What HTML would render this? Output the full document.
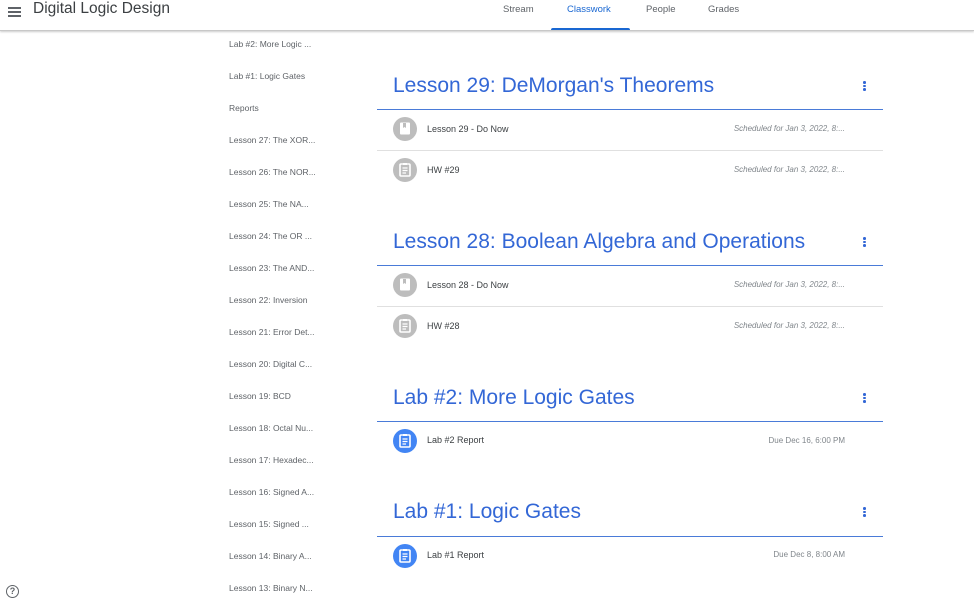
<!DOCTYPE html>
<html><head><meta charset="utf-8"><style>
*{margin:0;padding:0;box-sizing:border-box}
body{width:974px;height:598px;overflow:hidden;background:#fff;font-family:"Liberation Sans",Arial,sans-serif;position:relative}
.hdr{position:absolute;left:0;top:0;width:974px;height:31px;background:#fff;border-bottom:1px solid #c8c8c8;box-shadow:0 1px 2px rgba(0,0,0,.2);z-index:2}
.t{position:absolute;white-space:nowrap}
.side{position:absolute;left:229px;font-size:8.5px;color:#5f6368}
.title{position:absolute;left:393px;font-size:21px;color:#3367d6;line-height:24px}
.line{position:absolute;left:377px;width:506px;height:1px;background:#4a7bd8}
.div{position:absolute;left:377px;width:506px;height:1px;background:#e0e0e0}
.ic{position:absolute;left:393px;width:24px;height:24px;border-radius:50%;background:#bdbdbd}
.ic.b{background:#4285f4}
.ic svg{position:absolute;left:6px;top:5px}
.name{position:absolute;left:427px;font-size:9px;color:#3c4043}
.date{position:absolute;right:129px;font-size:8px;color:#80868b}
.it{font-style:italic}
.dots{position:absolute;left:863px;width:3px}
.dots i{display:block;width:2.5px;height:2.5px;border-radius:50%;background:#3367d6;margin-bottom:1.2px}
</style></head><body>
<div class="hdr">
 <div class="t" style="left:8px;top:5px;width:13px"><div style="height:1.5px;background:#5f6368;margin:2px 0 2.5px"></div><div style="height:1.5px;background:#5f6368;margin-bottom:2.5px"></div><div style="height:1.5px;background:#5f6368"></div></div>
 <div class="t" style="left:33px;top:0;font-size:15.5px;color:#3c4043">Digital Logic Design</div>
 <div class="t" style="left:503px;top:4px;font-size:9.5px;color:#5f6368">Stream</div>
 <div class="t" style="left:567px;top:4px;font-size:9.5px;color:#1967d2">Classwork</div>
 <div class="t" style="left:646px;top:4px;font-size:9.5px;color:#5f6368">People</div>
 <div class="t" style="left:708px;top:4px;font-size:9.5px;color:#5f6368">Grades</div>
 <div class="t" style="left:551px;top:28px;width:79px;height:2px;background:#1967d2;border-radius:2px 2px 0 0"></div>
</div>

<div class="t side" style="top:39px">Lab #2: More Logic ...</div>
<div class="t side" style="top:71px">Lab #1: Logic Gates</div>
<div class="t side" style="top:103px">Reports</div>
<div class="t side" style="top:135px">Lesson 27: The XOR...</div>
<div class="t side" style="top:167px">Lesson 26: The NOR...</div>
<div class="t side" style="top:199px">Lesson 25: The NA...</div>
<div class="t side" style="top:231px">Lesson 24: The OR ...</div>
<div class="t side" style="top:263px">Lesson 23: The AND...</div>
<div class="t side" style="top:295px">Lesson 22: Inversion</div>
<div class="t side" style="top:327px">Lesson 21: Error Det...</div>
<div class="t side" style="top:359px">Lesson 20: Digital C...</div>
<div class="t side" style="top:391px">Lesson 19: BCD</div>
<div class="t side" style="top:423px">Lesson 18: Octal Nu...</div>
<div class="t side" style="top:455px">Lesson 17: Hexadec...</div>
<div class="t side" style="top:487px">Lesson 16: Signed A...</div>
<div class="t side" style="top:519px">Lesson 15: Signed ...</div>
<div class="t side" style="top:551px">Lesson 14: Binary A...</div>
<div class="t side" style="top:583px">Lesson 13: Binary N...</div>

<div class="t" style="left:6px;top:585px;width:13px;height:13px;border:1.5px solid #5f6368;border-radius:50%;font-size:9px;color:#5f6368;text-align:center;line-height:10px;font-weight:bold">?</div>

<div class="title t" style="top:74px">Lesson 29: DeMorgan's Theorems</div>
<div class="dots" style="top:81px"><i></i><i></i><i></i></div>
<div class="line" style="top:109px"></div>
<div class="ic" style="top:117px"><svg width="12" height="14" viewBox="0 0 12 14"><rect x="1" y="0.5" width="10" height="12" rx="1" fill="#fff"/><path d="M4 1v5l1.5-1 1.5 1V1z" fill="#bdbdbd"/></svg></div>
<div class="t name" style="top:124px">Lesson 29 - Do Now</div>
<div class="t date it" style="top:124px">Scheduled for Jan 3, 2022, 8:...</div>
<div class="div" style="top:150px"></div>
<div class="ic" style="top:158px"><svg width="12" height="14" viewBox="0 0 12 14"><rect x="1" y="1" width="10" height="12" rx="1" fill="none" stroke="#fff" stroke-width="1.6"/><rect x="4" y="0" width="4" height="2" fill="#fff"/><path d="M3.5 5h5M3.5 7.5h5M3.5 10h3.5" stroke="#fff" stroke-width="1.2"/></svg></div>
<div class="t name" style="top:165px">HW #29</div>
<div class="t date it" style="top:165px">Scheduled for Jan 3, 2022, 8:...</div>

<div class="title t" style="top:230px">Lesson 28: Boolean Algebra and Operations</div>
<div class="dots" style="top:237px"><i></i><i></i><i></i></div>
<div class="line" style="top:265px"></div>
<div class="ic" style="top:273px"><svg width="12" height="14" viewBox="0 0 12 14"><rect x="1" y="0.5" width="10" height="12" rx="1" fill="#fff"/><path d="M4 1v5l1.5-1 1.5 1V1z" fill="#bdbdbd"/></svg></div>
<div class="t name" style="top:280px">Lesson 28 - Do Now</div>
<div class="t date it" style="top:280px">Scheduled for Jan 3, 2022, 8:...</div>
<div class="div" style="top:306px"></div>
<div class="ic" style="top:314px"><svg width="12" height="14" viewBox="0 0 12 14"><rect x="1" y="1" width="10" height="12" rx="1" fill="none" stroke="#fff" stroke-width="1.6"/><rect x="4" y="0" width="4" height="2" fill="#fff"/><path d="M3.5 5h5M3.5 7.5h5M3.5 10h3.5" stroke="#fff" stroke-width="1.2"/></svg></div>
<div class="t name" style="top:321px">HW #28</div>
<div class="t date it" style="top:321px">Scheduled for Jan 3, 2022, 8:...</div>

<div class="title t" style="top:386px">Lab #2: More Logic Gates</div>
<div class="dots" style="top:393px"><i></i><i></i><i></i></div>
<div class="line" style="top:421px"></div>
<div class="ic b" style="top:429px"><svg width="12" height="14" viewBox="0 0 12 14"><rect x="1" y="1" width="10" height="12" rx="1" fill="none" stroke="#fff" stroke-width="1.6"/><rect x="4" y="0" width="4" height="2" fill="#fff"/><path d="M3.5 5h5M3.5 7.5h5M3.5 10h3.5" stroke="#fff" stroke-width="1.2"/></svg></div>
<div class="t name" style="top:435px">Lab #2 Report</div>
<div class="t date" style="top:436px">Due Dec 16, 6:00 PM</div>

<div class="title t" style="top:500px">Lab #1: Logic Gates</div>
<div class="dots" style="top:507px"><i></i><i></i><i></i></div>
<div class="line" style="top:536px"></div>
<div class="ic b" style="top:544px"><svg width="12" height="14" viewBox="0 0 12 14"><rect x="1" y="1" width="10" height="12" rx="1" fill="none" stroke="#fff" stroke-width="1.6"/><rect x="4" y="0" width="4" height="2" fill="#fff"/><path d="M3.5 5h5M3.5 7.5h5M3.5 10h3.5" stroke="#fff" stroke-width="1.2"/></svg></div>
<div class="t name" style="top:550px">Lab #1 Report</div>
<div class="t date" style="top:550px">Due Dec 8, 8:00 AM</div>
</body></html>
